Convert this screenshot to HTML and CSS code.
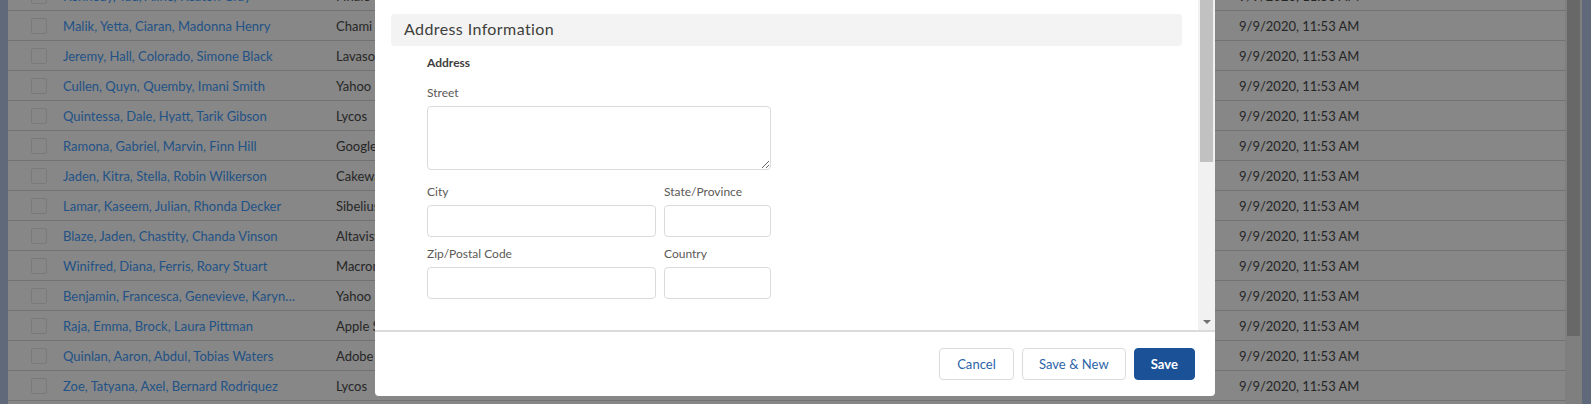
FILE: index.html
```html
<!DOCTYPE html>
<html lang="en">
<head>
<meta charset="utf-8">
<title>New Contact</title>
<link rel="stylesheet" href="styles.css">
</head>
<body>
<div class="screen">
  <div class="list">
    <div class="row"><div class="cell-check"><span class="checkbox"></span></div><div class="cell-name">Kennedy, Tad, Aline, Keaton Gray</div><div class="cell-co">Finale</div><div class="cell-hidden"></div><div class="cell-date">9/9/2020, 11:53 AM</div></div>
    <div class="row"><div class="cell-check"><span class="checkbox"></span></div><div class="cell-name">Malik, Yetta, Ciaran, Madonna Henry</div><div class="cell-co">Chami</div><div class="cell-hidden"></div><div class="cell-date">9/9/2020, 11:53 AM</div></div>
    <div class="row"><div class="cell-check"><span class="checkbox"></span></div><div class="cell-name">Jeremy, Hall, Colorado, Simone Black</div><div class="cell-co">Lavasoft</div><div class="cell-hidden"></div><div class="cell-date">9/9/2020, 11:53 AM</div></div>
    <div class="row"><div class="cell-check"><span class="checkbox"></span></div><div class="cell-name">Cullen, Quyn, Quemby, Imani Smith</div><div class="cell-co">Yahoo</div><div class="cell-hidden"></div><div class="cell-date">9/9/2020, 11:53 AM</div></div>
    <div class="row"><div class="cell-check"><span class="checkbox"></span></div><div class="cell-name">Quintessa, Dale, Hyatt, Tarik Gibson</div><div class="cell-co">Lycos</div><div class="cell-hidden"></div><div class="cell-date">9/9/2020, 11:53 AM</div></div>
    <div class="row"><div class="cell-check"><span class="checkbox"></span></div><div class="cell-name">Ramona, Gabriel, Marvin, Finn Hill</div><div class="cell-co">Google</div><div class="cell-hidden"></div><div class="cell-date">9/9/2020, 11:53 AM</div></div>
    <div class="row"><div class="cell-check"><span class="checkbox"></span></div><div class="cell-name">Jaden, Kitra, Stella, Robin Wilkerson</div><div class="cell-co">Cakewalk</div><div class="cell-hidden"></div><div class="cell-date">9/9/2020, 11:53 AM</div></div>
    <div class="row"><div class="cell-check"><span class="checkbox"></span></div><div class="cell-name">Lamar, Kaseem, Julian, Rhonda Decker</div><div class="cell-co">Sibelius</div><div class="cell-hidden"></div><div class="cell-date">9/9/2020, 11:53 AM</div></div>
    <div class="row"><div class="cell-check"><span class="checkbox"></span></div><div class="cell-name">Blaze, Jaden, Chastity, Chanda Vinson</div><div class="cell-co">Altavista</div><div class="cell-hidden"></div><div class="cell-date">9/9/2020, 11:53 AM</div></div>
    <div class="row"><div class="cell-check"><span class="checkbox"></span></div><div class="cell-name">Winifred, Diana, Ferris, Roary Stuart</div><div class="cell-co">Macromedia</div><div class="cell-hidden"></div><div class="cell-date">9/9/2020, 11:53 AM</div></div>
    <div class="row"><div class="cell-check"><span class="checkbox"></span></div><div class="cell-name">Benjamin, Francesca, Genevieve, Karyna Morales</div><div class="cell-co">Yahoo</div><div class="cell-hidden"></div><div class="cell-date">9/9/2020, 11:53 AM</div></div>
    <div class="row"><div class="cell-check"><span class="checkbox"></span></div><div class="cell-name">Raja, Emma, Brock, Laura Pittman</div><div class="cell-co">Apple Systems</div><div class="cell-hidden"></div><div class="cell-date">9/9/2020, 11:53 AM</div></div>
    <div class="row"><div class="cell-check"><span class="checkbox"></span></div><div class="cell-name">Quinlan, Aaron, Abdul, Tobias Waters</div><div class="cell-co">Adobe</div><div class="cell-hidden"></div><div class="cell-date">9/9/2020, 11:53 AM</div></div>
    <div class="row"><div class="cell-check"><span class="checkbox"></span></div><div class="cell-name">Zoe, Tatyana, Axel, Bernard Rodriquez</div><div class="cell-co">Lycos</div><div class="cell-hidden"></div><div class="cell-date">9/9/2020, 11:53 AM</div></div>
    <div class="row"><div class="cell-check"><span class="checkbox"></span></div><div class="cell-name">Hedda, Oren, Kaye, Wyatt Moss</div><div class="cell-co">Borland</div><div class="cell-hidden"></div><div class="cell-date">9/9/2020, 11:53 AM</div></div>
  </div>
  <div class="page-scroll"><div class="page-thumb"></div></div>
</div>

<div class="modal">
  <div class="modal-body">
    <div class="modal-content">
      <div class="section-title">Address Information</div>
      <div class="address">
        <div class="address-title">Address</div>
        <label class="label">Street</label>
        <textarea class="textarea"></textarea>
        <div class="field-row first">
          <div class="field"><label class="label">City</label><input class="input" type="text"></div>
          <div class="field"><label class="label">State/Province</label><input class="input" type="text"></div>
        </div>
        <div class="field-row">
          <div class="field"><label class="label">Zip/Postal Code</label><input class="input" type="text"></div>
          <div class="field"><label class="label">Country</label><input class="input" type="text"></div>
        </div>
      </div>
    </div>
    <div class="modal-scroll">
      <div class="modal-thumb"></div>
      <div class="modal-arrow"><span class="arrow-down"></span></div>
    </div>
  </div>
  <div class="modal-footer">
    <button class="btn btn-neutral">Cancel</button>
    <button class="btn btn-neutral btn-wide">Save &amp; New</button>
    <button class="btn btn-brand">Save</button>
  </div>
</div>
</body>
</html>
```

FILE: styles.css
```css
* {
  box-sizing: border-box;
}

html, body {
  margin: 0;
  padding: 0;
}

body {
  width: 1591px;
  height: 404px;
  overflow: hidden;
  position: relative;
  background: #5f6979;
  font-family: Lato, "Liberation Sans", sans-serif;
  font-size: 13px;
  color: #232323;
}

.screen {
  display: flex;
  height: 404px;
  padding-left: 8px;
  padding-right: 9px;
}

.list {
  flex: 1;
  display: flex;
  flex-direction: column;
  margin-top: -19px;
  background: #878787;
  overflow: hidden;
}

.row {
  flex: none;
  display: grid;
  grid-template-columns: 55px 273px 180px 723px 1fr;
  align-items: center;
  height: 30px;
  border-bottom: 1px solid #727272;
}

.cell-check {
  padding-left: 23px;
  display: flex;
  align-items: center;
}

.checkbox {
  display: block;
  width: 16px;
  height: 16px;
  border: 1px solid #7a7a7a;
  border-radius: 2px;
}

.cell-name {
  padding-right: 36px;
  white-space: nowrap;
  overflow: hidden;
  text-overflow: ellipsis;
  color: #225286;
}

.cell-co,
.cell-date {
  white-space: nowrap;
  overflow: hidden;
  color: #262626;
}

.page-scroll {
  width: 17px;
  background: #7f7f7f;
  padding: 0 2px;
}

.page-thumb {
  height: 336px;
  background: #686868;
}

/* Modal */
.modal {
  position: absolute;
  top: 0;
  left: 375px;
  width: 840px;
  bottom: 8px;
  background: #ffffff;
  border-radius: 0 0 4px 4px;
  display: flex;
  flex-direction: column;
  overflow: hidden;
}

.modal-body {
  flex: 1;
  display: flex;
  min-height: 0;
}

.modal-content {
  flex: 1;
  padding: 14px 16px 0 16px;
}

.section-title {
  height: 32px;
  background: #f3f3f3;
  border-radius: 4px;
  padding: 0 13px 4px;
  display: flex;
  align-items: center;
  font-size: 16px;
  letter-spacing: 0.4px;
  color: #3e3e3c;
}

.address {
  margin: 8px 0 0 36px;
  width: 344px;
}

.address-title {
  font-size: 12px;
  line-height: 18px;
  font-weight: 700;
  color: #3e3e3c;
  margin-bottom: 12px;
}

.label {
  display: block;
  font-size: 12px;
  line-height: 18px;
  color: #5b5956;
  margin-bottom: 4px;
}

.textarea {
  display: block;
  width: 100%;
  height: 64px;
  border: 1px solid #dddbda;
  border-radius: 4px;
  font-family: inherit;
  margin: 0;
}

.field-row {
  display: grid;
  grid-template-columns: 229px 107px;
  gap: 8px;
  margin-top: 8px;
}

.field-row.first {
  margin-top: 13px;
}

.input {
  display: block;
  width: 100%;
  height: 32px;
  border: 1px solid #dddbda;
  border-radius: 4px;
  margin: 0;
  font-family: inherit;
}

.modal-scroll {
  width: 17px;
  background: #f1f1f1;
  display: flex;
  flex-direction: column;
  justify-content: space-between;
}

.modal-thumb {
  height: 162px;
  margin: 0 2px;
  background: #c1c1c1;
}

.modal-arrow {
  height: 17px;
  display: flex;
  align-items: center;
  justify-content: center;
}

.arrow-down {
  width: 0;
  height: 0;
  border-left: 4px solid transparent;
  border-right: 4px solid transparent;
  border-top: 4px solid #707070;
}

.modal-footer {
  flex: none;
  border-top: 2px solid #dddbda;
  padding: 16px 20px 16px;
  display: flex;
  justify-content: flex-end;
  gap: 8px;
}

.btn {
  height: 32px;
  padding: 0 17px;
  border-radius: 4px;
  font-family: inherit;
  font-size: 13px;
  letter-spacing: 0.05px;
  line-height: 30px;
  margin: 0;
}

.btn-wide {
  padding: 0 16px;
}

.btn-neutral {
  background: #ffffff;
  border: 1px solid #dddbda;
  color: #2b64a8;
}

.btn-brand {
  padding: 0 16px;
  background: #1b5297;
  border: 1px solid #1b5297;
  color: #ffffff;
  font-weight: 700;
}
```
